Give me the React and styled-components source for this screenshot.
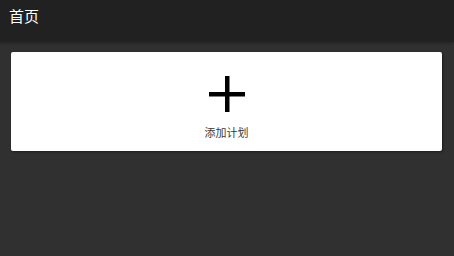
import React from "react";
import styled, { createGlobalStyle } from "styled-components";

const Global = createGlobalStyle`
  html, body { margin: 0; padding: 0; background: #303030; }
  body { font-family: Roboto, "Noto Sans CJK SC", sans-serif; }
`;

const Page = styled.div`
  width: 454px;
  height: 256px;
  background: #303030;
  display: flex;
  flex-direction: column;
`;

const Header = styled.header`
  height: 42px;
  background: #212121;
  display: flex;
  align-items: flex-start;
  padding: 7px 9px 0;
  box-sizing: border-box;
  color: #ffffff;
  font-size: 15px;
  line-height: 20px;
  box-shadow: 0 1px 3px rgba(0, 0, 0, 0.3);
`;

const Body = styled.main`
  padding: 10px 12px 0 11px;
  display: flex;
  flex-direction: column;
`;

const Card = styled.button`
  height: 99px;
  background: #ffffff;
  border: none;
  border-radius: 2px;
  box-shadow: 1px 1px 2px rgba(0, 0, 0, 0.45);
  display: flex;
  flex-direction: column;
  align-items: center;
  padding: 24px 0 0;
  cursor: pointer;
  font-family: inherit;
`;

const PlusIcon = styled.svg`
  width: 36px;
  height: 36px;
  display: block;
`;

const Label = styled.span`
  margin-top: 15px;
  font-size: 11px;
  color: #3a3a3a;
  line-height: 13px;
`;

export default function App() {
  return (
    <>
      <Global />
      <Page>
        <Header>首页</Header>
        <Body>
          <Card>
            <PlusIcon viewBox="0 0 36 36">
              <rect x="16" y="0" width="4.5" height="36" fill="#000" />
              <rect x="0" y="16" width="36" height="4.5" fill="#000" />
            </PlusIcon>
            <Label>添加计划</Label>
          </Card>
        </Body>
      </Page>
    </>
  );
}
